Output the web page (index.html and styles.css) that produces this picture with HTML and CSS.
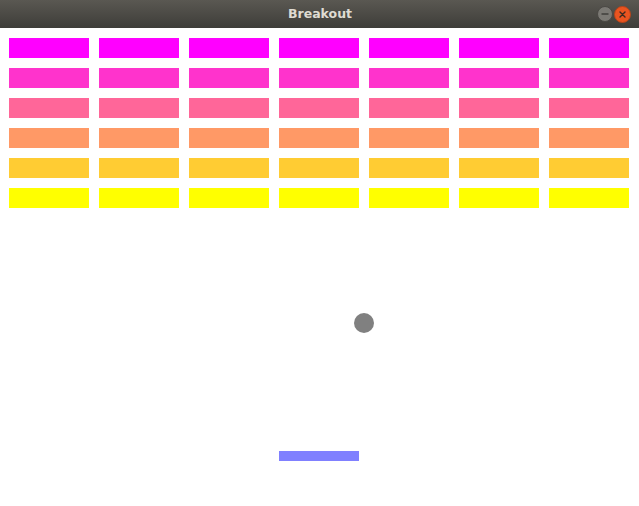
FILE: index.html
```html
<!DOCTYPE html>
<html>
<head>
<meta charset="utf-8">
<title>Breakout</title>
<link rel="stylesheet" href="styles.css">
</head>
<body>
<div class="window">
  <header class="titlebar">
    <span class="title">Breakout</span>
    <div class="controls">
      <span class="btn min"><svg width="16" height="16" viewBox="0 0 16 16"><circle cx="8" cy="8" r="7.5" fill="#7b7974" stroke="#4a4844" stroke-width="1"/><line x1="4.5" y1="8" x2="11.5" y2="8" stroke="#3c3b37" stroke-width="1.4"/></svg></span>
      <span class="btn close"><svg width="17" height="17" viewBox="0 0 17 17"><circle cx="8.5" cy="8.5" r="8" fill="#ea5420" stroke="#b8441a" stroke-width="1"/><path d="M6 6 L11 11 M11 6 L6 11" stroke="#3c2a20" stroke-width="1.4" stroke-linecap="round"/></svg></span>
    </div>
  </header>
  <main class="board">
    <div class="bricks">
      <div class="brick r1"></div><div class="brick r1"></div><div class="brick r1"></div><div class="brick r1"></div><div class="brick r1"></div><div class="brick r1"></div><div class="brick r1"></div>
      <div class="brick r2"></div><div class="brick r2"></div><div class="brick r2"></div><div class="brick r2"></div><div class="brick r2"></div><div class="brick r2"></div><div class="brick r2"></div>
      <div class="brick r3"></div><div class="brick r3"></div><div class="brick r3"></div><div class="brick r3"></div><div class="brick r3"></div><div class="brick r3"></div><div class="brick r3"></div>
      <div class="brick r4"></div><div class="brick r4"></div><div class="brick r4"></div><div class="brick r4"></div><div class="brick r4"></div><div class="brick r4"></div><div class="brick r4"></div>
      <div class="brick r5"></div><div class="brick r5"></div><div class="brick r5"></div><div class="brick r5"></div><div class="brick r5"></div><div class="brick r5"></div><div class="brick r5"></div>
      <div class="brick r6"></div><div class="brick r6"></div><div class="brick r6"></div><div class="brick r6"></div><div class="brick r6"></div><div class="brick r6"></div><div class="brick r6"></div>
    </div>
    <div class="ball"></div>
    <div class="paddle"></div>
  </main>
</div>
</body>
</html>
```
FILE: styles.css
```css
html, body {
  margin: 0;
  padding: 0;
  background: #ffffff;
  overflow: hidden;
}
.window {
  width: 639px;
  height: 506px;
  display: flex;
  flex-direction: column;
}
.titlebar {
  height: 28px;
  flex: 0 0 28px;
  position: relative;
  display: flex;
  align-items: center;
  justify-content: center;
  background: linear-gradient(#5a5852, #3e3d39);
}
.title {
  font-family: "DejaVu Sans", sans-serif;
  font-weight: bold;
  font-size: 12.5px;
  color: #dfdbd2;
  margin-top: -1px;
  margin-left: 1px;
}
.controls {
  position: absolute;
  right: 8px;
  top: 5px;
  display: flex;
  align-items: center;
  gap: 1px;
}
.btn { display: block; height: 17px; }
.btn.min { margin-top: 1px; }
.board {
  position: relative;
  flex: 1;
  background: #ffffff;
}
.bricks {
  display: grid;
  grid-template-columns: repeat(7, 80px);
  grid-auto-rows: 20px;
  column-gap: 10px;
  row-gap: 10px;
  padding: 10px 0 0 9px;
}
.r1 { background: #ff00ff; }
.r2 { background: #ff33cc; }
.r3 { background: #ff6699; }
.r4 { background: #ff9966; }
.r5 { background: #ffcc33; }
.r6 { background: #ffff00; }
.ball {
  position: absolute;
  left: 354px;
  top: 285px;
  width: 20px;
  height: 20px;
  border-radius: 50%;
  background: #808080;
}
.paddle {
  position: absolute;
  left: 279px;
  top: 423px;
  width: 80px;
  height: 10px;
  background: #8080ff;
}
```
